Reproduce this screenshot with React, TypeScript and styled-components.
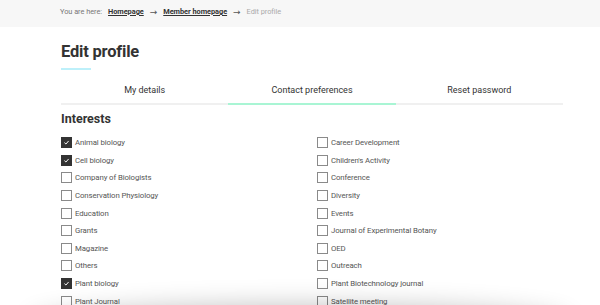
import React from "react";
import styled, { createGlobalStyle } from "styled-components";

const Global = createGlobalStyle`
  html, body { margin: 0; padding: 0; background: #fff; overflow: hidden; }
  body { font-family: Roboto, "Noto Sans", sans-serif; color: #333; }
`;

const Crumbs = styled.nav`
  background: #f7f7f7;
  height: 27px;
  box-sizing: border-box;
  padding: 7px 0 0 60px;
  display: flex;
  align-items: flex-start;
  gap: 6px;
  font-size: 7.4px;
  letter-spacing: -0.05px;
  line-height: 10px;
  color: #777;
`;

const CrumbLink = styled.a`
  color: #333;
  font-weight: 700;
  text-decoration: underline;
`;

const CrumbCurrent = styled.span`
  color: #aaa;
`;

const Arrow = styled.span`
  color: #555;
  font-family: "DejaVu Sans", sans-serif;
  font-size: 9px;
  line-height: 10px;
`;

const Main = styled.main`
  width: 502px;
  margin-left: 61px;
  padding-top: 14px;
`;

const Title = styled.h1`
  margin: 0;
  font-size: 16.5px;
  line-height: 22px;
  font-weight: 700;
  color: #333;
  letter-spacing: -0.2px;
`;

const TitleBar = styled.div`
  width: 30px;
  height: 2px;
  background: #bdf0fa;
  margin-top: 5px;
`;

const Tabs = styled.div`
  display: grid;
  grid-template-columns: repeat(3, 1fr);
  margin-top: 5px;
`;

const Tab = styled.div<{ $active?: boolean }>`
  text-align: center;
  font-size: 9px;
  line-height: 12px;
  color: #333;
  padding: 9px 0 7px;
  border-bottom: 2px solid ${(p) => (p.$active ? "#a9f5d4" : "#f0f0f0")};
`;

const Section = styled.h2`
  margin: 6px 0 7px;
  font-size: 12.5px;
  line-height: 16px;
  font-weight: 700;
  color: #333;
`;

const Columns = styled.div`
  display: grid;
  grid-template-columns: 256px 1fr;
`;

const Column = styled.div`
  display: flex;
  flex-direction: column;
`;

const Row = styled.label`
  display: flex;
  align-items: center;
  height: 17.6px;
  font-size: 7.8px;
  letter-spacing: -0.1px;
  color: #555;
  gap: 3px;
`;

const Box = styled.span<{ $checked?: boolean }>`
  box-sizing: border-box;
  width: 11px;
  height: 11px;
  flex: none;
  border: 1px solid ${(p) => (p.$checked ? "#333" : "#8a8a8a")};
  background: ${(p) => (p.$checked ? "#333" : "#fff")};
  display: flex;
  align-items: center;
  justify-content: center;
`;

const Shade = styled.div`
  position: fixed;
  left: 30px;
  right: 30px;
  bottom: -40px;
  height: 40px;
  border-radius: 50%;
  background: #fff;
  box-shadow: 0 0 26px rgba(0, 0, 0, 0.24);
`;

const left: [string, boolean][] = [
  ["Animal biology", true],
  ["Cell biology", true],
  ["Company of Biologists", false],
  ["Conservation Physiology", false],
  ["Education", false],
  ["Grants", false],
  ["Magazine", false],
  ["Others", false],
  ["Plant biology", true],
  ["Plant Journal", false],
];

const right: [string, boolean][] = [
  ["Career Development", false],
  ["Children's Activity", false],
  ["Conference", false],
  ["Diversity", false],
  ["Events", false],
  ["Journal of Experimental Botany", false],
  ["OED", false],
  ["Outreach", false],
  ["Plant Biotechnology journal", false],
  ["Satellite meeting", false],
];

function Check({ label, checked }: { label: string; checked: boolean }) {
  return (
    <Row>
      <Box $checked={checked}>
        {checked && (
          <svg width="7" height="7" viewBox="0 0 10 10">
            <path d="M2 5.2 L4.2 7.2 L8 2.8" fill="none" stroke="#fff" strokeWidth="1.4" />
          </svg>
        )}
      </Box>
      {label}
    </Row>
  );
}

export default function App() {
  return (
    <>
      <Global />
      <Crumbs>
        <span>You are here:</span>
        <CrumbLink>Homepage</CrumbLink>
        <Arrow>→</Arrow>
        <CrumbLink>Member homepage</CrumbLink>
        <Arrow>→</Arrow>
        <CrumbCurrent>Edit profile</CrumbCurrent>
      </Crumbs>
      <Main>
        <Title>Edit profile</Title>
        <TitleBar />
        <Tabs>
          <Tab>My details</Tab>
          <Tab $active>Contact preferences</Tab>
          <Tab>Reset password</Tab>
        </Tabs>
        <Section>Interests</Section>
        <Columns>
          <Column>
            {left.map(([l, c]) => (
              <Check key={l} label={l} checked={c} />
            ))}
          </Column>
          <Column>
            {right.map(([l, c]) => (
              <Check key={l} label={l} checked={c} />
            ))}
          </Column>
        </Columns>
      </Main>
      <Shade />
    </>
  );
}
